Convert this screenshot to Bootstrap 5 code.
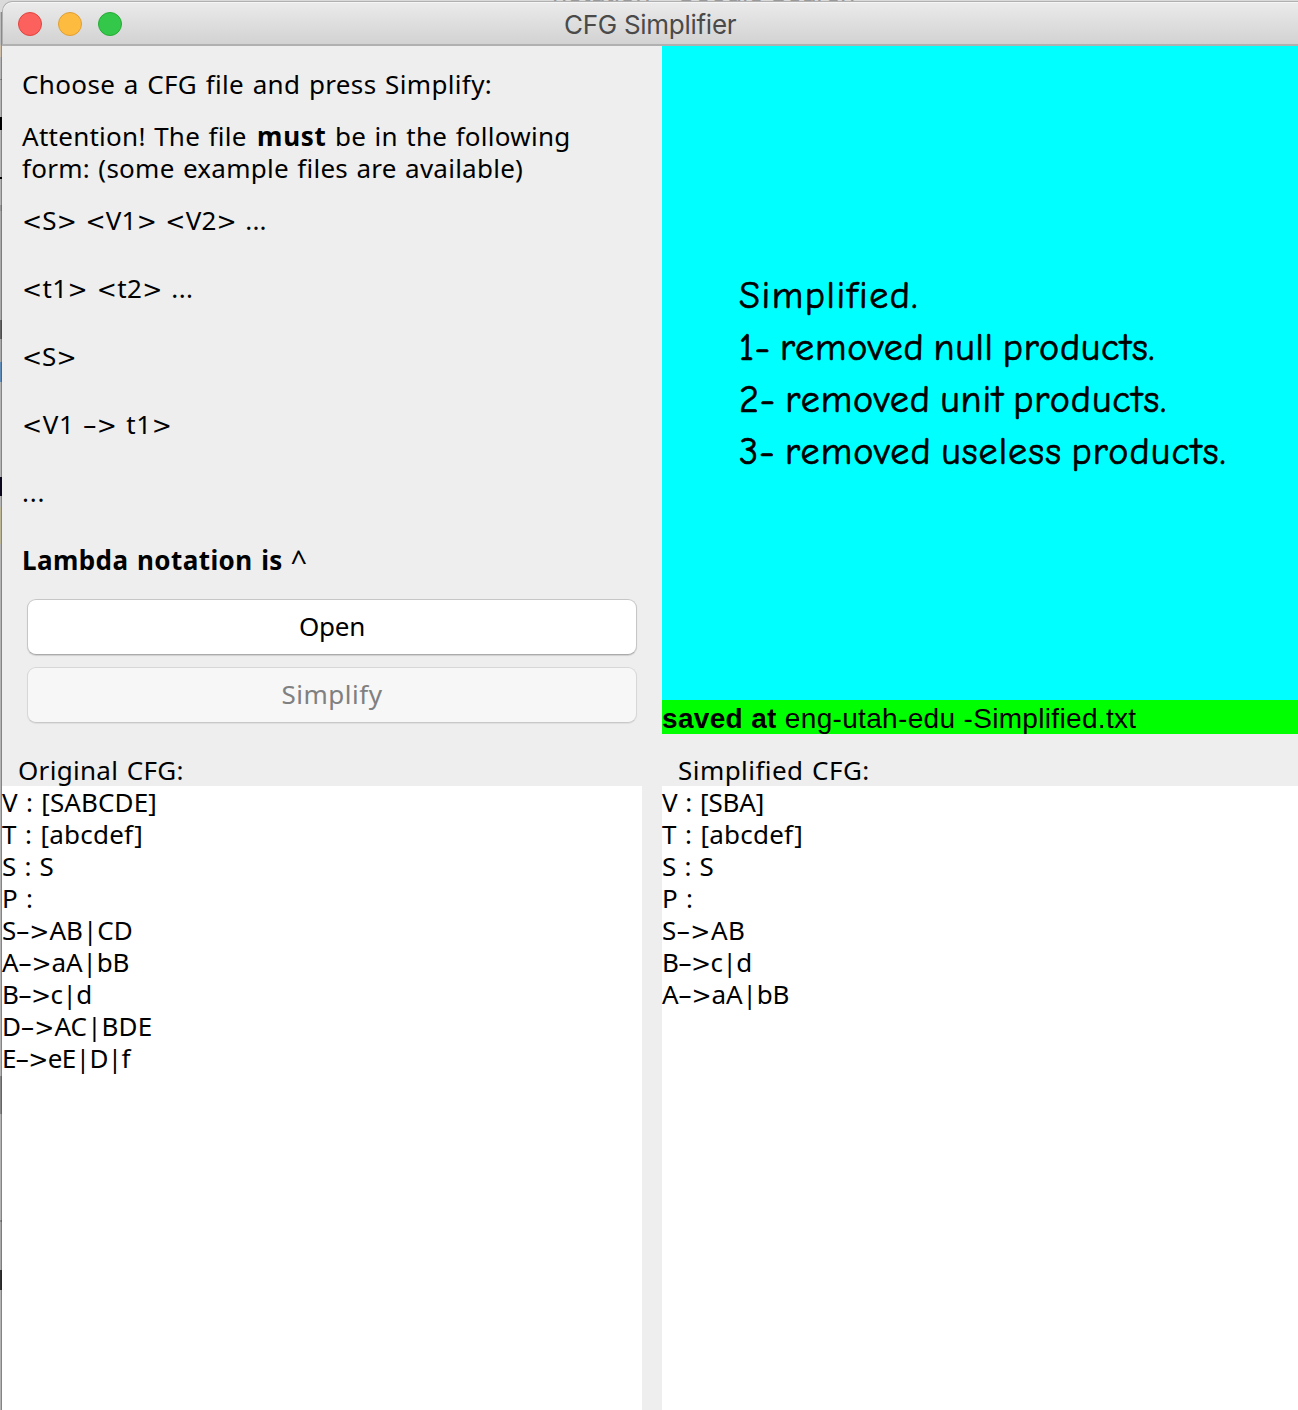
<!DOCTYPE html>
<html lang="en">
<head>
<meta charset="utf-8">
<title>CFG Simplifier</title>
<link href="https://cdn.jsdelivr.net/npm/bootstrap@5.3.0/dist/css/bootstrap.min.css" rel="stylesheet">
<style>
body{background:#aeaeae;color:#000;font:26px/32px "Noto Sans","Open Sans",sans-serif;height:1410px;overflow:hidden}
.backdrop{height:12px;background:#dadada;color:#999;font:26px/30px Inter,sans-serif;top:0;left:0;right:0;padding-left:552px}
.backdrop span{margin-top:-22px;letter-spacing:-.2px}
/* sliver of the desktop left of the window */
.edge{width:2px;background:
  linear-gradient(90deg,transparent 50%,#0004 50%),
  linear-gradient(#dadada 12px,#bbb 12px 45px,#d0bfa8 45px 57px,#b4b4b4 57px 79px,#8a8a8a 79px 80px,#b4b4b4 80px 117px,#000 117px 130px,#b4b4b4 130px 177px,#000 177px 179px,#b4b4b4 179px 205px,#999 205px 211px,#aaa 211px 320px,#666 320px 339px,#aaa 339px 362px,#5f8db8 362px 382px,#b4b4b4 382px 477px,#0d0820 477px 496px,#b4b4b4 496px 507px,#bdb795 507px 544px,#b4b4b4 544px 1076px,#888 1076px 1114px,#b4b4b4 1114px 1220px,#8a8a8a 1220px 1222px,#aaa 1222px 1270px,#333 1270px 1290px,#b4b4b4 1290px)}
.app-window{width:1296px;padding-top:1px;z-index:1}
.titlebar{height:45px;border:1px solid #b0b0b0;border-right:0;border-bottom:2px solid #b0b0b0;border-radius:10px 0 0 0;background:linear-gradient(#ebebeb,#d2d2d2);box-shadow:inset 0 1px #f6f6f6;color:#4a4a4a;font:26px/42px Inter,sans-serif;padding-left:15px}
.titlebar svg{width:106px;height:26px;margin-top:2px}
.app-title{left:561px;top:2px;letter-spacing:-.28px}
.app-body{background:#eee}
.left-col{width:640px;margin-right:20px}
.upper{height:688px}
.help{padding:22px 0 0 20px}
.help p{margin:0 0 20px}
.help .rule-line{margin-bottom:36px}
.actions{padding:0 5px 0 25px;margin-top:23px;gap:12px}
.mac-btn{height:56px;border:1px solid #c6c6c6;border-bottom-color:#ababab;border-radius:9px;background:#fff;color:#000;font-size:26px;line-height:32px;padding:0 0 2px;box-shadow:0 1px 1px #0002}
.mac-btn:disabled{background:#f7f7f7;color:#808080;border-color:#d7d7d7;border-bottom-color:#c9c9c9;opacity:1;box-shadow:0 1px 1px #0001}
.status{background:#0ff;height:654px;padding:224px 0 0 77px;font:38px/52px "Comic Sans MS","Comic Neue","Noto Sans",sans-serif;-webkit-text-stroke:.7px #000;font-variant-ligatures:none}
.saved{background:#0f0;height:34px;font:28px/38px "Liberation Sans",Arial,sans-serif;letter-spacing:.33px}
.caption{height:52px;padding:20px 0 0 16px}
.output{background:#fff}
.left-col,.caption,.output{word-spacing:1.4px}
span{white-space:pre}
/* wide comparison signs */
.sg{font:24px/0 "DejaVu Sans",sans-serif}
.caret{font-size:29px;line-height:0;vertical-align:-2px;margin-left:-1px}
.t1{letter-spacing:.36px}.t2{letter-spacing:.27px}.t2 b{letter-spacing:.7px;margin-left:2px}.t3{letter-spacing:.25px}
.t4{letter-spacing:.2px}.t5{letter-spacing:.4px}.t7{letter-spacing:.6px}.t8{letter-spacing:.8px}.t9{letter-spacing:.42px}
.t10{letter-spacing:-.2px}.t11{letter-spacing:.5px}.t12{letter-spacing:.3px}.t13{letter-spacing:.45px}
.o1{letter-spacing:.1px}.o2{letter-spacing:.2px}.o6{letter-spacing:-.1px}.o7{letter-spacing:-.5px}.o8{letter-spacing:.1px}.o9{letter-spacing:-.6px}
.r1{letter-spacing:-.2px}.r5{letter-spacing:.5px}
.s1{letter-spacing:1.6px}.s2{letter-spacing:.81px;word-spacing:-4.5px}.s3{letter-spacing:.98px;word-spacing:-4.5px}.s4{letter-spacing:1.13px;word-spacing:-4.5px}
</style>
</head>
<body>
<div class="backdrop position-absolute d-flex overflow-hidden"><span>notation - Google Search</span></div>
<div class="d-flex h-100">
  <div class="edge"></div>
  <main class="app-window d-flex flex-column">
    <header class="titlebar d-flex align-items-center position-relative flex-shrink-0">
      <svg viewBox="0 0 106 26"><g stroke-width="1"><circle cx="12" cy="13" r="11.5" fill="#fc615d" stroke="#e0443f"/><circle cx="52" cy="13" r="11.5" fill="#fdbc40" stroke="#de9f34"/><circle cx="92" cy="13" r="11.5" fill="#34c84a" stroke="#27aa35"/></g></svg>
      <span class="app-title position-absolute">CFG Simplifier</span>
    </header>
    <div class="app-body d-flex flex-grow-1">
      <section class="left-col d-flex flex-column">
        <div class="upper">
          <div class="help">
            <p><span class="t1">Choose a CFG file and press Simplify:</span></p>
            <p><span class="t2">Attention! The file <b>must</b> be in the following</span><br><span class="t3">form: (some example files are available)</span></p>
            <p class="rule-line"><span class="t4"><span class="sg">&lt;</span>S<span class="sg">&gt;</span> <span class="sg">&lt;</span>V1<span class="sg">&gt;</span> <span class="sg">&lt;</span>V2<span class="sg">&gt;</span> ...</span></p>
            <p class="rule-line"><span class="t5"><span class="sg">&lt;</span>t1<span class="sg">&gt;</span> <span class="sg">&lt;</span>t2<span class="sg">&gt;</span> ...</span></p>
            <p class="rule-line"><span class="t6"><span class="sg">&lt;</span>S<span class="sg">&gt;</span></span></p>
            <p class="rule-line"><span class="t7"><span class="sg">&lt;</span>V1 –<span class="sg">&gt;</span> t1<span class="sg">&gt;</span></span></p>
            <p class="rule-line"><span class="t8">...</span></p>
            <p><span class="t9"><b>Lambda notation is</b> <span class="caret">^</span></span></p>
          </div>
          <div class="actions d-grid">
            <button class="btn mac-btn"><span class="t10">Open</span></button>
            <button class="btn mac-btn" disabled><span class="t11">Simplify</span></button>
          </div>
        </div>
        <div class="caption"><span class="t12">Original CFG:</span></div>
        <div class="output flex-grow-1"><span class="o1">V : [SABCDE]</span><br><span class="o2">T : [abcdef]</span><br><span class="o3">S : S</span><br><span class="o4">P :</span><br><span class="o5">S–<span class="sg">&gt;</span>AB|CD</span><br><span class="o6">A–<span class="sg">&gt;</span>aA|bB</span><br><span class="o7">B–<span class="sg">&gt;</span>c|d</span><br><span class="o8">D–<span class="sg">&gt;</span>AC|BDE</span><br><span class="o9">E–<span class="sg">&gt;</span>eE|D|f</span></div>
      </section>
      <section class="d-flex flex-column flex-grow-1">
        <div class="upper">
          <div class="status"><span class="s1">Simplified.</span><br><span class="s2">1- removed null products.</span><br><span class="s3">2- removed unit products.</span><br><span class="s4">3- removed useless products.</span></div>
          <div class="saved"><span><b>saved at</b> eng-utah-edu -Simplified.txt</span></div>
        </div>
        <div class="caption"><span class="t13">Simplified CFG:</span></div>
        <div class="output flex-grow-1"><span class="r1">V : [SBA]</span><br><span class="o2">T : [abcdef]</span><br><span class="o3">S : S</span><br><span class="o4">P :</span><br><span class="r5">S–<span class="sg">&gt;</span>AB</span><br><span class="o7">B–<span class="sg">&gt;</span>c|d</span><br><span class="o6">A–<span class="sg">&gt;</span>aA|bB</span></div>
      </section>
    </div>
  </main>
</div>
<script src="https://cdn.jsdelivr.net/npm/bootstrap@5.3.0/dist/js/bootstrap.bundle.min.js"></script>
</body>
</html>
